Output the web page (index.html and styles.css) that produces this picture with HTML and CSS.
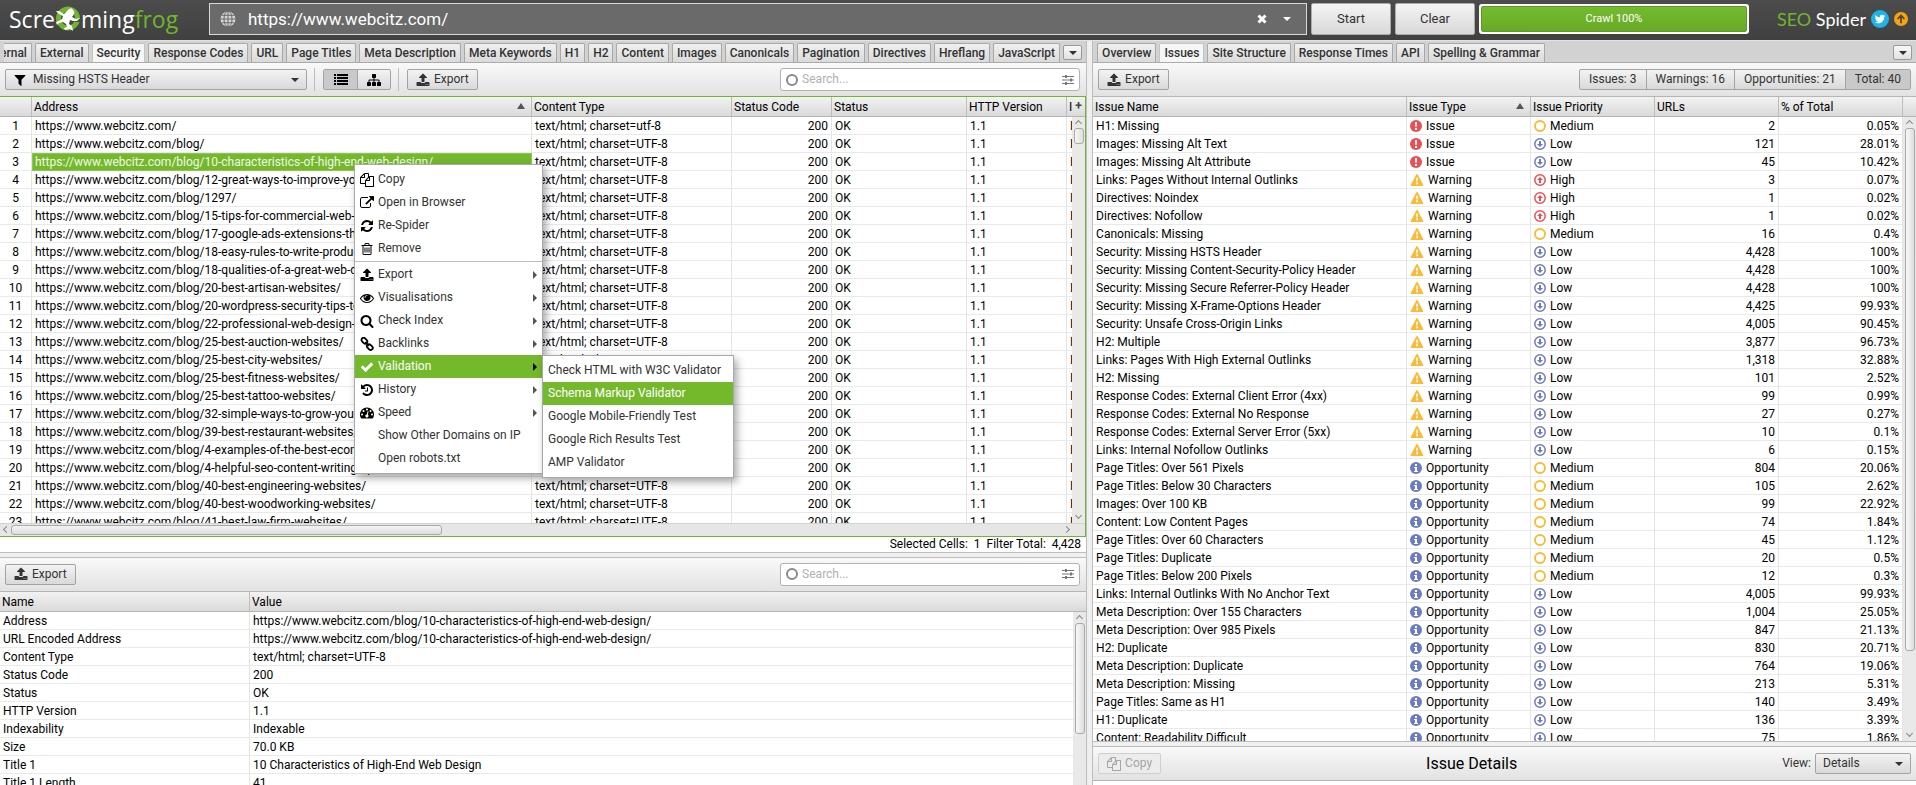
FILE: index.html
```html
<!DOCTYPE html>
<html lang="en">
<head>
    <meta charset="UTF-8">
    <meta name="viewport" content="width=device-width, initial-scale=1.0">
    <title>Screaming Frog SEO Spider</title>
    <link rel="stylesheet" href="styles.css">
</head>
<body>
    <!-- icon sprite -->
    <svg class="sprite" aria-hidden="true">
        <symbol id="i-filter" viewBox="0 0 1792 1792"><path d="M1595 295q17 41-14 70l-493 493v742q0 42-39 59-13 5-25 5-27 0-45-19l-256-256q-19-19-19-45v-486l-493-493q-31-29-14-70 17-39 59-39h1280q42 0 59 39z"/></symbol>
        <symbol id="i-list" viewBox="0 0 14 12"><path d="M0 0h2v2H0zM3 0h11v2H3zM0 3h2v2H0zM3 3h11v2H3zM0 6h2v2H0zM3 6h11v2H3zM0 9h2v2H0zM3 9h11v2H3z"/></symbol>
        <symbol id="i-sitemap" viewBox="0 0 1792 1792"><path d="M1792 1248v320q0 40-28 68t-68 28h-320q-40 0-68-28t-28-68v-320q0-40 28-68t68-28h96v-192h-512v192h96q40 0 68 28t28 68v320q0 40-28 68t-68 28h-320q-40 0-68-28t-28-68v-320q0-40 28-68t68-28h96v-192h-512v192h96q40 0 68 28t28 68v320q0 40-28 68t-68 28h-320q-40 0-68-28t-28-68v-320q0-40 28-68t68-28h96v-192q0-52 38-90t90-38h512v-192h-96q-40 0-68-28t-28-68v-320q0-40 28-68t68-28h320q40 0 68 28t28 68v320q0 40-28 68t-68 28h-96v192h512q52 0 90 38t38 90v192h96q40 0 68 28t28 68z"/></symbol>
        <symbol id="i-upload" viewBox="0 0 1792 1792"><path d="M1344 1472q0-26-19-45t-45-19-45 19-19 45 19 45 45 19 45-19 19-45zm256 0q0-26-19-45t-45-19-45 19-19 45 19 45 45 19 45-19 19-45zm128-224v320q0 40-28 68t-68 28h-1472q-40 0-68-28t-28-68v-320q0-40 28-68t68-28h427q21 56 70.5 92t110.5 36h256q61 0 110.5-36t70.5-92h427q40 0 68 28t28 68zm-325-648q-17 40-59 40h-256v448q0 26-19 45t-45 19h-256q-26 0-45-19t-19-45v-448h-256q-42 0-59-40-17-39 14-69l448-448q18-19 45-19t45 19l448 448q31 30 14 69z"/></symbol>
        <symbol id="i-copy" viewBox="0 0 1792 1792"><path d="M1696 384q40 0 68 28t28 68v1216q0 40-28 68t-68 28h-960q-40 0-68-28t-28-68v-288h-544q-40 0-68-28t-28-68v-672q0-40 20-88t48-76l408-408q28-28 76-48t88-20h416q40 0 68 28t28 68v328q68-40 128-40h416zm-544 213l-299 299h299v-299zm-640-384l-299 299h299v-299zm196 647l316-316v-416h-384v416q0 40-28 68t-68 28h-416v640h512v-256q0-40 20-88t48-76zm956 804v-1152h-384v416q0 40-28 68t-68 28h-416v640h896z"/></symbol>
        <symbol id="i-open" viewBox="0 0 1792 1792"><path d="M1408 928v320q0 119-84.5 203.5t-203.5 84.5h-832q-119 0-203.5-84.5t-84.5-203.5v-832q0-119 84.5-203.5t203.5-84.5h704q14 0 23 9t9 23v64q0 14-9 23t-23 9h-704q-66 0-113 47t-47 113v832q0 66 47 113t113 47h832q66 0 113-47t47-113v-320q0-14 9-23t23-9h64q14 0 23 9t9 23zm384-864v512q0 26-19 45t-45 19-45-19l-176-176-652 652q-10 10-23 10t-23-10l-114-114q-10-10-10-23t10-23l652-652-176-176q-19-19-19-45t19-45 45-19h512q26 0 45 19t19 45z"/></symbol>
        <symbol id="i-refresh" viewBox="0 0 1792 1792"><path d="M1639 1056q0 5-1 7-64 268-268 434.5t-478 166.5q-146 0-282.5-55t-243.5-157l-129 129q-19 19-45 19t-45-19-19-45v-448q0-26 19-45t45-19h448q26 0 45 19t19 45-19 45l-137 137q71 66 161 102t187 36q134 0 250-65t186-179q11-17 53-117 8-23 30-23h192q13 0 22.5 9.5t9.5 22.5zm25-800v448q0 26-19 45t-45 19h-448q-26 0-45-19t-19-45 19-45l138-138q-148-137-349-137-134 0-250 65t-186 179q-11 17-53 117-8 23-30 23h-199q-13 0-22.5-9.5t-9.5-22.5v-7q65-268 270-434.5t480-166.5q146 0 284 55.5t245 156.5l130-129q19-19 45-19t45 19 19 45z"/></symbol>
        <symbol id="i-trash" viewBox="0 0 1792 1792"><path d="M704 736v576q0 14-9 23t-23 9h-64q-14 0-23-9t-9-23v-576q0-14 9-23t23-9h64q14 0 23 9t9 23zm256 0v576q0 14-9 23t-23 9h-64q-14 0-23-9t-9-23v-576q0-14 9-23t23-9h64q14 0 23 9t9 23zm256 0v576q0 14-9 23t-23 9h-64q-14 0-23-9t-9-23v-576q0-14 9-23t23-9h64q14 0 23 9t9 23zm128 724v-948h-896v948q0 22 7 40.5t14.5 27 10.5 8.5h832q3 0 10.5-8.5t14.5-27 7-40.5zm-672-1076h448l-48-117q-7-9-17-11h-317q-10 2-17 11zm928 32v64q0 14-9 23t-23 9h-96v948q0 83-47 143.5t-113 60.5h-832q-66 0-113-58.5t-47-141.5v-952h-96q-14 0-23-9t-9-23v-64q0-14 9-23t23-9h309l70-167q15-37 54-63t79-26h320q40 0 79 26t54 63l70 167h309q14 0 23 9t9 23z"/></symbol>
        <symbol id="i-eye" viewBox="0 0 1792 1792"><path d="M1664 960q-152-236-381-353 61 104 61 225 0 185-131.5 316.5t-316.5 131.5-316.5-131.5-131.5-316.5q0-121 61-225-229 117-381 353 133 205 333.5 326.5t434.5 121.5 434.5-121.5 333.5-326.5zm-720-384q0-20-14-34t-34-14q-125 0-214.5 89.5t-89.5 214.5q0 20 14 34t34 14 34-14 14-34q0-86 61-147t147-61q20 0 34-14t14-34zm848 384q0 34-20 69-140 230-376.5 368.5t-499.5 138.5-499.5-139-376.5-368q-20-35-20-69t20-69q140-229 376.5-368t499.5-139 499.5 139 376.5 368q20 35 20 69z"/></symbol>
        <symbol id="i-search" viewBox="0 0 1792 1792"><path d="M1216 832q0-185-131.5-316.5t-316.5-131.5-316.5 131.5-131.5 316.5 131.5 316.5 316.5 131.5 316.5-131.5 131.5-316.5zm512 832q0 52-38 90t-90 38q-54 0-90-38l-343-342q-179 124-399 124-143 0-273.5-55.5t-225-150-150-225-55.5-273.5 55.5-273.5 150-225 225-150 273.5-55.5 273.5 55.5 225 150 150 225 55.5 273.5q0 220-124 399l343 343q37 37 37 90z"/></symbol>
        <symbol id="i-link" viewBox="0 0 14 14"><g fill="none" stroke="currentColor" stroke-width="1.8"><rect x="1.2" y="1.6" width="6.4" height="4.2" rx="2" transform="rotate(45 4.4 3.7)"/><rect x="6.6" y="8" width="6.4" height="4.2" rx="2" transform="rotate(45 9.8 10.1)"/><path d="M5.4 5l3.4 4"/></g></symbol>
        <symbol id="i-check" viewBox="0 0 1792 1792"><path d="M1671 566q0 40-28 68l-724 724-136 136q-28 28-68 28t-68-28l-136-136-362-362q-28-28-28-68t28-68l136-136q28-28 68-28t68 28l294 295 656-657q28-28 68-28t68 28l136 136q28 28 28 68z"/></symbol>
        <symbol id="i-history" viewBox="0 0 1792 1792"><path d="M1664 896q0 156-61 298t-164 245-245 164-298 61q-172 0-327-72.5t-264-204.5q-7-10-6.5-22.5t8.5-20.5l137-138q10-9 25-9 16 2 23 12 73 95 179 147t225 52q104 0 198.5-40.5t163.5-109.5 109.5-163.5 40.5-198.5-40.5-198.5-109.5-163.5-163.5-109.5-198.5-40.5q-98 0-188 35.5t-160 101.5l137 138q31 30 14 69-17 40-59 40h-448q-26 0-45-19t-19-45v-448q0-42 40-59 39-17 69 14l130 129q107-101 244.5-156.5t284.5-55.5q156 0 298 61t245 164 164 245 61 298zm-640-288v448q0 14-9 23t-23 9h-320q-14 0-23-9t-9-23v-64q0-14 9-23t23-9h224v-352q0-14 9-23t23-9h64q14 0 23 9t9 23z"/></symbol>
        <symbol id="i-speed" viewBox="0 0 14 14"><path fill-rule="evenodd" d="M7 1.500a7 7 0 0 1 7 7c0 1.400-.4 2.700-1.100 3.800a.6.6 0 0 1-.5.2H1.600a.6.6 0 0 1-.5-.2A7 7 0 0 1 7 1.500zM2 7.500a1 1 0 1 0 0 2 1 1 0 0 0 0-2zM3.500 4a1 1 0 1 0 0 2 1 1 0 0 0 0-2zM7 2.500a1 1 0 1 0 0 2 1 1 0 0 0 0-2zM10.500 4a1 1 0 1 0 0 2 1 1 0 0 0 0-2zM12 7.500a1 1 0 1 0 0 2 1 1 0 0 0 0-2zM7.600 5.200l-.8 3.300a1.500 1.500 0 1 0 1 .3l.8-3.300z"/></symbol>
        <symbol id="i-sliders" viewBox="0 0 12 12"><path d="M0 2h12v1H0zM0 5.500h12v1H0zM0 9h12v1H0zM3 1h2v3H3zM8 4.500h2v3H8zM3 8h2v3H3z"/></symbol>
        <symbol id="i-globe" viewBox="0 0 16 16"><circle cx="8" cy="8" r="7.500"/><path d="M8 0v16M0 8h16M1.500 4.300h13M1.500 11.700h13" stroke="#6a6a6a" fill="none"/><ellipse cx="8" cy="8" rx="4" ry="7.800" stroke="#6a6a6a" fill="none"/></symbol>
        <symbol id="i-close" viewBox="0 0 10 10"><path d="M1.500 1.500l7 7M8.500 1.500l-7 7" stroke="currentColor" stroke-width="3" fill="none"/></symbol>
        <symbol id="i-twitter" viewBox="0 0 1792 1792"><path d="M1684 408q-67 98-162 167 1 14 1 42 0 130-38 259.500t-115.500 248.500-184.500 210.500-258 146-323 54.500q-271 0-496-145 35 4 78 4 225 0 401-138-105-2-188-64.500t-114-159.500q33 5 61 5 43 0 85-11-112-23-185.500-111.500t-73.500-205.500v-4q68 38 146 41-66-44-105-115t-39-154q0-88 44-163 121 149 294.500 238.500t371.500 99.500q-8-38-8-74 0-134 94.500-228.500t228.500-94.500q140 0 236 102 109-21 205-78-37 115-142 178 93-10 186-50z"/></symbol>
        <symbol id="i-issue" viewBox="0 0 12 12"><circle cx="6" cy="6" r="6" fill="#e94f57"/><path d="M5 2h2l-.3 5H5.300zM5 8h2v2H5z" fill="#fff"/></symbol>
        <symbol id="i-warning" viewBox="0 0 14 13"><path d="M7 0q.5 0 .8.5l6 11.500q.3 1-.6 1H.8q-.9 0-.6-1l6-11.500Q6.500 0 7 0z" fill="#fdb933"/><path d="M6 4h2l-.3 4H6.300zM6 9h2v2H6z" fill="#fff"/></symbol>
        <symbol id="i-info" viewBox="0 0 12 12"><circle cx="6" cy="6" r="6" fill="#6b7cc0"/><path d="M5 2h2v2H5zM4 5h3v4h1v1H4V9h1V6H4z" fill="#fff"/></symbol>
        <symbol id="i-medium" viewBox="0 0 12 12"><circle cx="6" cy="6" r="5" fill="none" stroke="#fdb933" stroke-width="1.900"/></symbol>
        <symbol id="i-low" viewBox="0 0 12 12"><circle cx="6" cy="6" r="5.200" fill="none" stroke="#6b7cc0" stroke-width="1.500"/><path d="M5 3h2v3h2L6 9 3 6h2z" fill="#6b7cc0"/></symbol>
        <symbol id="i-high" viewBox="0 0 12 12"><circle cx="6" cy="6" r="5.200" fill="none" stroke="#e94f57" stroke-width="1.500"/><path d="M5 9h2V6h2L6 3 3 6h2z" fill="#e94f57"/></symbol>
    </svg>

    <header class="topbar">
        <div class="logo">
            <span>Scre</span>
            <svg class="frog" viewBox="0 0 26 28" aria-hidden="true">
                <circle cx="13" cy="13.500" r="9.500" fill="none" stroke="#6fb62c" stroke-width="5"/>
                <path d="M20 14h5v3h-5z" fill="#4a4a4a"/>
                <path d="M14 4q3-2 4 1 2 1 1 4-1 2-2 3l4 2 4-1-3 3-4 0-3-1-1 4 3 2 1 5-3-2-5 1-1-2 3-1-1-3-3-2-4 1-2 2-1-3 3-1 3-2 1-3-4-2-3-3 3 0 5 3z" fill="#fff"/>
            </svg>
            <span>ming</span><span class="green">frog</span>
        </div>
        <div class="url-box">
            <svg class="globe"><use href="#i-globe"/></svg>
            <input type="text" aria-label="URL" value="https://www.webcitz.com/">
            <button class="plain" aria-label="Clear URL"><svg class="close"><use href="#i-close"/></svg></button>
            <button class="plain" aria-label="Recent URLs"><i class="caret"></i></button>
        </div>
        <button class="big-btn">Start</button>
        <button class="big-btn">Clear</button>
        <div class="progress" role="progressbar" aria-valuenow="100"><div>Crawl 100%</div></div>
        <div class="brand"><span class="green">SEO</span> Spider</div>
        <a href="#" class="twitter" aria-label="Twitter"><svg><use href="#i-twitter"/></svg></a>
        <a href="#" class="update" aria-label="Update available"><svg viewBox="0 0 14 14"><path d="M7 12V3M3 7l4-4 4 4" fill="none" stroke="#444" stroke-width="2"/></svg></a>
    </header>

    <main class="panes">
        <div class="left">
            <section class="pane pane-main">
                <div class="tabs">
                    <div class="tab-list tab-list-end">
                        <button>Internal</button>
                        <button>External</button>
                        <button class="active">Security</button>
                        <button>Response Codes</button>
                        <button>URL</button>
                        <button>Page Titles</button>
                        <button>Meta Description</button>
                        <button>Meta Keywords</button>
                        <button>H1</button>
                        <button>H2</button>
                        <button>Content</button>
                        <button>Images</button>
                        <button>Canonicals</button>
                        <button>Pagination</button>
                        <button>Directives</button>
                        <button>Hreflang</button>
                        <button>JavaScript</button>
                    </div>
                    <button class="tab-more" aria-label="More tabs"><i class="caret"></i></button>
                </div>
                <div class="toolbar">
                    <div class="combo combo-filter">
                        <svg class="icon"><use href="#i-filter"/></svg>
                        <select aria-label="Filter"><option>Missing HSTS Header</option></select>
                        <i class="caret"></i>
                    </div>
                    <span class="sep"></span>
                    <div class="seg seg-icons">
                        <button class="on" aria-label="List view"><svg class="icon icon-list"><use href="#i-list"/></svg></button>
                        <button aria-label="Tree view"><svg class="icon"><use href="#i-sitemap"/></svg></button>
                    </div>
                    <span class="sep"></span>
                    <button class="btn"><svg class="icon"><use href="#i-upload"/></svg>Export</button>
                    <div class="search">
                        <i class="ring"></i>
                        <input type="text" aria-label="Search URLs" placeholder="Search...">
                        <svg class="sliders"><use href="#i-sliders"/></svg>
                    </div>
                </div>
                <div class="grid grid-focus">
                    <div class="grid-row">
                        <div class="viewport">
                            <table class="urls">
                                <colgroup><col class="c-num"><col class="c-addr"><col class="c-type"><col class="c-100"><col class="c-status"><col class="c-100"><col class="c-100"></colgroup>
                                <thead><tr><th></th><th class="sorted">Address</th><th>Content Type</th><th>Status Code</th><th>Status</th><th>HTTP Version</th><th>Indexability</th></tr></thead>
                                <tbody id="urlRows"></tbody>
                            </table>
                        </div>
                        <div class="scroll-col">
                            <button class="cap" aria-label="Add column">+</button>
                            <div class="vbar"><i class="arrow up"></i><i class="thumb thumb-small"></i><i class="arrow down"></i></div>
                        </div>
                    </div>
                    <div class="hbar"><i class="arrow back"></i><i class="thumb"></i><i class="arrow next"></i></div>
                </div>
                <div class="status-line"><span>Selected Cells:&nbsp; 1</span><span>Filter Total:&nbsp; 4,428</span></div>

                <div class="menu menu-context">
                    <button><svg class="icon"><use href="#i-copy"/></svg>Copy</button>
                    <button><svg class="icon"><use href="#i-open"/></svg>Open in Browser</button>
                    <button><svg class="icon"><use href="#i-refresh"/></svg>Re-Spider</button>
                    <button><svg class="icon"><use href="#i-trash"/></svg>Remove</button>
                    <hr>
                    <button class="more"><svg class="icon"><use href="#i-upload"/></svg>Export</button>
                    <button class="more"><svg class="icon"><use href="#i-eye"/></svg>Visualisations</button>
                    <button class="more"><svg class="icon"><use href="#i-search"/></svg>Check Index</button>
                    <button class="more"><svg class="icon"><use href="#i-link"/></svg>Backlinks</button>
                    <button class="more on"><svg class="icon"><use href="#i-check"/></svg>Validation</button>
                    <button class="more"><svg class="icon"><use href="#i-history"/></svg>History</button>
                    <button class="more"><svg class="icon"><use href="#i-speed"/></svg>Speed</button>
                    <button><span class="icon"></span>Show Other Domains on IP</button>
                    <button><span class="icon"></span>Open robots.txt</button>
                </div>
                <div class="menu menu-sub">
                    <button>Check HTML with W3C Validator</button>
                    <button class="on">Schema Markup Validator</button>
                    <button>Google Mobile-Friendly Test</button>
                    <button>Google Rich Results Test</button>
                    <button>AMP Validator</button>
                </div>
            </section>

            <div class="split-h"></div>

            <section class="pane pane-details">
                <div class="toolbar">
                    <button class="btn"><svg class="icon"><use href="#i-upload"/></svg>Export</button>
                    <div class="search">
                        <i class="ring"></i>
                        <input type="text" aria-label="Search details" placeholder="Search...">
                        <svg class="sliders"><use href="#i-sliders"/></svg>
                    </div>
                </div>
                <div class="grid">
                    <div class="grid-row">
                        <div class="viewport">
                            <table>
                                <colgroup><col class="c-name"><col></colgroup>
                                <thead><tr><th>Name</th><th class="last">Value</th></tr></thead>
                                <tbody id="detailRows"></tbody>
                            </table>
                        </div>
                        <div class="scroll-col">
                            <div class="cap"></div>
                            <div class="vbar"><i class="arrow up"></i><i class="thumb thumb-mid"></i></div>
                        </div>
                    </div>
                </div>
            </section>
        </div>

        <div class="split-v"></div>

        <section class="pane right">
            <div class="tabs">
                <div class="tab-list">
                    <button>Overview</button>
                    <button class="active">Issues</button>
                    <button>Site Structure</button>
                    <button>Response Times</button>
                    <button>API</button>
                    <button>Spelling &amp; Grammar</button>
                </div>
                <button class="tab-more" aria-label="More tabs"><i class="caret"></i></button>
            </div>
            <div class="toolbar">
                <button class="btn"><svg class="icon"><use href="#i-upload"/></svg>Export</button>
                <div class="seg seg-counts">
                    <button>Issues: 3</button>
                    <button>Warnings: 16</button>
                    <button>Opportunities: 21</button>
                    <button class="on">Total: 40</button>
                </div>
            </div>
            <div class="grid">
                <div class="grid-row">
                    <div class="viewport">
                        <table class="issues">
                            <colgroup><col><col class="c-issue"><col class="c-issue"><col class="c-issue"><col class="c-issue"></colgroup>
                            <thead><tr><th>Issue Name</th><th class="sorted">Issue Type</th><th>Issue Priority</th><th>URLs</th><th>% of Total</th></tr></thead>
                            <tbody id="issueRows"></tbody>
                        </table>
                    </div>
                    <div class="scroll-col">
                        <div class="cap"></div>
                        <div class="vbar"><i class="arrow up"></i><i class="thumb thumb-large"></i><i class="arrow down"></i></div>
                    </div>
                </div>
            </div>
            <div class="split-h"></div>
            <div class="toolbar toolbar-details">
                <button class="btn" disabled><svg class="icon"><use href="#i-copy"/></svg>Copy</button>
                <h2>Issue Details</h2>
                <div class="view">
                    <label for="view">View:</label>
                    <div class="combo combo-view">
                        <select id="view"><option>Details</option></select>
                        <i class="caret"></i>
                    </div>
                </div>
            </div>
            <div class="details-body"></div>
        </section>
    </main>

    <script src="app.js"></script>
</body>
</html>
```

FILE: styles.css
```css
* {
    box-sizing: border-box;
}
body {
    margin: 0;
    height: 100vh;
    display: flex;
    flex-direction: column;
    overflow: hidden;
    background: #fff;
    color: #000;
    font-family: Roboto, Arial, sans-serif;
    font-size: 12px;
    line-height: 17px;
}
button, input, select {
    font: inherit;
    color: inherit;
    margin: 0;
}
button {
    padding: 0;
    border: 0;
    background: none;
    white-space: nowrap;
}
svg {
    display: block;
    fill: currentColor;
    flex: none;
}
.sprite {
    position: absolute;
    width: 0;
    height: 0;
}
.icon {
    width: 14px;
    height: 14px;
    flex: none;
}
.green {
    color: #6fb62c;
}
.caret {
    flex: none;
    width: 0;
    height: 0;
    border: 4px solid transparent;
    border-top-color: currentColor;
    border-bottom: 0;
}

/* top bar */
.topbar {
    flex: none;
    display: flex;
    align-items: center;
    height: 41px;
    padding: 0 8px 3px 9px;
    background: linear-gradient(#4c4c4c, #404040);
    border-bottom: 1px solid #e4e4e4;
    color: #fff;
}
.logo {
    width: 200px;
    display: flex;
    align-items: center;
    font: 23px/32px "Open Sans", sans-serif;
}
.frog {
    width: 26px;
    height: 28px;
}
.url-box {
    flex: 1;
    display: flex;
    align-items: center;
    height: 32px;
    padding: 0 15px 0 10px;
    background: #6a6a6a;
    border: 1px solid #d8d8d8;
}
.globe {
    width: 16px;
    height: 16px;
    color: #d5d5d5;
}
.url-box input {
    flex: 1;
    min-width: 0;
    padding: 0 12px;
    border: 0;
    background: none;
    font-size: 17px;
    line-height: 24px;
}
.close {
    width: 10px;
    height: 10px;
}
.plain {
    display: flex;
}
.plain + .plain {
    margin-left: 16px;
}
.big-btn {
    width: 80px;
    height: 32px;
    margin-left: 4px;
    border: 1px solid #ababab;
    border-radius: 2px;
    background: linear-gradient(#f4f4f4, #d8d8d8);
    color: #333;
    font-size: 13px;
}
.progress {
    width: 270px;
    height: 30px;
    margin: 0 28px 0 4px;
    padding: 2px;
    background: #fff;
    border-radius: 3px;
}
.progress div {
    height: 26px;
    border: 1px solid #5c9a22;
    border-radius: 2px;
    background: linear-gradient(#74bb2e, #69a926);
    font-size: 11px;
    line-height: 24px;
    text-align: center;
}
.brand {
    font: 18px/24px Lato, sans-serif;
}
.twitter, .update {
    display: flex;
    align-items: center;
    justify-content: center;
    border-radius: 50%;
}
.twitter {
    width: 18px;
    height: 18px;
    margin: 0 5px;
    background: #1db4ec;
    color: #fff;
}
.twitter svg {
    width: 12px;
    height: 12px;
}
.update {
    width: 14px;
    height: 14px;
    background: #f9a20e;
}
.update svg {
    width: 12px;
    height: 12px;
}

/* panes */
.panes {
    flex: 1;
    min-height: 0;
    display: flex;
}
.left {
    width: 57%;
    flex: none;
    display: flex;
    flex-direction: column;
    margin-right: -6px;
    padding-right: 6px;
}
.pane {
    min-width: 0;
    min-height: 0;
    display: flex;
    flex-direction: column;
}
.pane-main {
    flex: 9;
    position: relative;
}
.pane-details {
    flex: 4;
}
.right {
    flex: 1;
}
.split-h {
    flex: none;
    height: 6px;
    border: solid #bdbdbd;
    border-width: 1px 0;
    background: #f0f0f0;
}
.split-v {
    flex: none;
    width: 7px;
    border: solid #bdbdbd;
    border-width: 0 1px;
    background: #efefef;
}

/* tabs */
.tabs {
    flex: none;
    display: flex;
    align-items: flex-end;
    height: 22px;
    padding: 0 4px;
    background: #d2d2d2;
    border-bottom: 1px solid #ababab;
}
.tab-list {
    flex: 1;
    min-width: 0;
    display: flex;
    gap: 3px;
    overflow: hidden;
}
.tab-list-end {
    justify-content: flex-end;
}
.tab-list button {
    flex: none;
    height: 19px;
    padding: 0 4px;
    border: 1px solid #a8a8a8;
    border-bottom: 0;
    border-radius: 2px 2px 0 0;
    background: linear-gradient(#f0f0f0, #dadada);
    color: #333;
    font-weight: 500;
}
.tab-list .active {
    background: #f6f6f6;
    border-color: #c4c4c4;
}
.tab-more {
    flex: none;
    display: flex;
    align-items: center;
    justify-content: center;
    width: 19px;
    height: 15px;
    margin: 0 0 2px 3px;
    border: 1px solid #999;
    border-radius: 2px;
    background: linear-gradient(#f8f8f8, #e2e2e2);
    color: #333;
}

/* toolbars */
.toolbar {
    flex: none;
    display: flex;
    align-items: center;
    height: 33px;
    padding: 0 5px;
    background: linear-gradient(#f9f9f9, #e2e2e2);
    color: #333;
}
.btn, .combo, .seg {
    height: 21px;
    border: 1px solid #a3a3a3;
    border-radius: 2px;
    background: linear-gradient(#f3f3f3, #d9d9d9);
}
.btn {
    display: flex;
    align-items: center;
    gap: 4px;
    padding: 0 8px;
}
.btn:disabled {
    color: #a5a5a5;
    border-color: #cfcfcf;
    background: #ececec;
}
.combo {
    display: flex;
    align-items: center;
    padding: 0 7px;
}
.combo select {
    flex: 1;
    min-width: 0;
    padding: 0;
    border: 0;
    background: none;
    appearance: none;
}
.combo-filter {
    width: 302px;
}
.combo-filter .icon {
    margin-right: 6px;
    color: #000;
}
.sep {
    width: 1px;
    height: 23px;
    margin: 0 8px 0 7px;
    background: #bdbdbd;
}
.seg {
    display: flex;
    overflow: hidden;
}
.seg button + button {
    border-left: 1px solid #a3a3a3;
}
.seg .on {
    background: #c9c9c9;
}
.seg-icons button {
    width: 33px;
    display: flex;
    align-items: center;
    justify-content: center;
    color: #000;
}
.icon-list {
    height: 12px;
}
.seg-counts {
    margin-left: auto;
}
.seg-counts button {
    padding: 0 9px;
}
.search {
    display: flex;
    align-items: center;
    width: 300px;
    height: 23px;
    margin: 0 1px 0 auto;
    padding: 0 5px;
    border: 1px solid #b2b2b2;
    border-radius: 3px;
    background: #fff;
}
.ring {
    width: 12px;
    height: 12px;
    border: 2px solid #8a8a8a;
    border-radius: 50%;
}
.search input {
    flex: 1;
    min-width: 0;
    padding: 0 4px;
    border: 0;
    background: none;
}
.search input::placeholder {
    color: #b0b0b0;
}
.sliders {
    width: 12px;
    height: 12px;
    color: #777;
}
.toolbar-details {
    justify-content: space-between;
    height: 34px;
    border-bottom: 1px solid #b5b5b5;
}
.toolbar-details h2 {
    margin: 0;
    color: #000;
    font-size: 16px;
    font-weight: 400;
}
.view {
    display: flex;
    align-items: center;
    gap: 4px;
}
.combo-view {
    width: 96px;
}
.details-body {
    flex: none;
    height: 4px;
}

/* tables */
.grid {
    flex: 1;
    min-height: 0;
    display: flex;
    flex-direction: column;
    overflow: hidden;
    border-top: 1px solid #b5b5b5;
}
.grid-focus {
    border: solid #6fb62c;
    border-width: 1px 1px 1px 0;
}
.grid-row {
    flex: 1;
    min-height: 0;
    display: flex;
}
.viewport {
    flex: 1;
    min-width: 0;
    overflow: hidden;
}
table {
    width: 100%;
    table-layout: fixed;
    border-spacing: 0;
}
.urls {
    width: 1167px;
}
.c-num {
    width: 32px;
}
.c-addr {
    width: 500px;
}
.c-type {
    width: 200px;
}
.c-100 {
    width: 100px;
}
.c-status {
    width: 135px;
}
.c-name {
    width: 250px;
}
.c-issue {
    width: 124px;
}
th, td {
    text-align: left;
    font-weight: 400;
    white-space: nowrap;
    overflow: hidden;
}
thead th, .cap {
    height: 20px;
    padding: 2px 2px 0;
    border-right: 1px solid #bdbdbd;
    border-bottom: 1px solid #b5b5b5;
    background: linear-gradient(#f2f2f2, #dadada);
}
td, tbody th {
    height: 18px;
    padding: 2px 3px 0;
    border-right: 1px solid #e4e4e4;
    border-bottom: 1px solid #e9e9e9;
    line-height: 15px;
}
tbody th {
    text-align: center;
}
.sorted::after {
    content: "";
    float: right;
    margin: 4px 4px 0 0;
    border: 4px solid transparent;
    border-top: 0;
    border-bottom: 6px solid #555;
}
th.last, td.last {
    border-right: 0;
}
.num {
    text-align: right;
}
td.selected {
    background: #74b82c;
    border: 1px solid #8cc84f;
    padding: 1px 2px 0;
    color: #f0f8e6;
}
.issues .icon {
    display: inline-block;
    width: 12px;
    height: 12px;
    margin-right: 4px;
    vertical-align: -2px;
}
.issues .icon-warning {
    width: 14px;
}

/* scrollbars */
.scroll-col {
    flex: none;
    width: 13px;
    display: flex;
    flex-direction: column;
}
.cap {
    flex: none;
    width: 13px;
    padding: 0;
    border-right: 0;
    color: #444;
    font-weight: 700;
}
.vbar {
    flex: 1;
    display: flex;
    flex-direction: column;
    align-items: center;
    padding: 4px 0 5px;
    background: #e9e9e9;
}
.hbar {
    flex: none;
    display: flex;
    align-items: center;
    height: 13px;
    padding: 0 16px 0 4px;
    background: #e6e6e6;
    border-top: 1px solid #d2d2d2;
}
.arrow {
    width: 5px;
    height: 5px;
    border: solid #888;
    border-width: 1px 0 0 1px;
}
.up {
    transform: rotate(45deg);
}
.down {
    margin-top: auto;
    transform: rotate(225deg);
}
.back {
    transform: rotate(-45deg);
}
.next {
    margin-left: auto;
    transform: rotate(135deg);
}
.thumb {
    border: 1px solid #a9a9a9;
    border-radius: 3px;
    background: linear-gradient(90deg, #f8f8f8, #dedede);
}
.vbar .thumb {
    width: 10px;
    margin-top: 2px;
}
.hbar .thumb {
    width: 431px;
    height: 10px;
    margin-left: 2px;
    background: linear-gradient(#f4f4f4, #dcdcdc);
}
.thumb-small {
    height: 16px;
}
.thumb-mid {
    height: 68%;
}
.thumb-large {
    height: 85%;
}
.status-line {
    flex: none;
    display: flex;
    justify-content: flex-end;
    gap: 6px;
    height: 15px;
    padding-right: 5px;
    line-height: 15px;
}

/* menus */
.menu {
    position: absolute;
    padding: 3px 0;
    border: 1px solid #a9a9a9;
    background: #fff;
    box-shadow: 3px 4px 8px rgba(0, 0, 0, 0.35);
}
.menu button {
    width: 100%;
    height: 23px;
    display: flex;
    align-items: center;
    gap: 4px;
    padding: 0 5px;
    color: #333;
}
.menu .icon {
    color: #000;
}
.menu .on, .menu .on .icon {
    background: #74b82c;
    color: #fff;
}
.menu hr {
    height: 1px;
    margin: 1px 0;
    border: 0;
    background: #bdbdbd;
}
.more::after {
    content: "";
    margin-left: auto;
    border: 4px solid transparent;
    border-left: 4px solid #555;
    border-right: 0;
}
.more.on::after {
    border-left-color: #000;
}
.menu-context {
    left: 354px;
    top: 123px;
    width: 189px;
}
.menu-sub {
    left: 542px;
    top: 314px;
    width: 192px;
}
```

FILE: app.js
```js
(function() {
    const base = 'https://www.webcitz.com/';
    const pages = [
        '', 'blog/', 'blog/10-characteristics-of-high-end-web-design/',
        'blog/12-great-ways-to-improve-your-website/', 'blog/1297/',
        'blog/15-tips-for-commercial-web-design/', 'blog/17-google-ads-extensions-that-work/',
        'blog/18-easy-rules-to-write-product-pages/', 'blog/18-qualities-of-a-great-web-design/',
        'blog/20-best-artisan-websites/', 'blog/20-wordpress-security-tips-to-use/',
        'blog/22-professional-web-design-tips/', 'blog/25-best-auction-websites/',
        'blog/25-best-city-websites/', 'blog/25-best-fitness-websites/',
        'blog/25-best-tattoo-websites/', 'blog/32-simple-ways-to-grow-your-list/',
        'blog/39-best-restaurant-websites/', 'blog/4-examples-of-the-best-ecommerce/',
        'blog/4-helpful-seo-content-writing-tips/', 'blog/40-best-engineering-websites/',
        'blog/40-best-woodworking-websites/', 'blog/41-best-law-firm-websites/'
    ];

    const details = [
        ['Address', base + pages[2]],
        ['URL Encoded Address', base + pages[2]],
        ['Content Type', 'text/html; charset=UTF-8'],
        ['Status Code', '200'],
        ['Status', 'OK'],
        ['HTTP Version', '1.1'],
        ['Indexability', 'Indexable'],
        ['Size', '70.0 KB'],
        ['Title 1', '10 Characteristics of High-End Web Design'],
        ['Title 1 Length', '41']
    ];

    // name, type, priority, urls, % of total
    const issues = [
        ['H1: Missing', 'Issue', 'Medium', '2', '0.05%'],
        ['Images: Missing Alt Text', 'Issue', 'Low', '121', '28.01%'],
        ['Images: Missing Alt Attribute', 'Issue', 'Low', '45', '10.42%'],
        ['Links: Pages Without Internal Outlinks', 'Warning', 'High', '3', '0.07%'],
        ['Directives: Noindex', 'Warning', 'High', '1', '0.02%'],
        ['Directives: Nofollow', 'Warning', 'High', '1', '0.02%'],
        ['Canonicals: Missing', 'Warning', 'Medium', '16', '0.4%'],
        ['Security: Missing HSTS Header', 'Warning', 'Low', '4,428', '100%'],
        ['Security: Missing Content-Security-Policy Header', 'Warning', 'Low', '4,428', '100%'],
        ['Security: Missing Secure Referrer-Policy Header', 'Warning', 'Low', '4,428', '100%'],
        ['Security: Missing X-Frame-Options Header', 'Warning', 'Low', '4,425', '99.93%'],
        ['Security: Unsafe Cross-Origin Links', 'Warning', 'Low', '4,005', '90.45%'],
        ['H2: Multiple', 'Warning', 'Low', '3,877', '96.73%'],
        ['Links: Pages With High External Outlinks', 'Warning', 'Low', '1,318', '32.88%'],
        ['H2: Missing', 'Warning', 'Low', '101', '2.52%'],
        ['Response Codes: External Client Error (4xx)', 'Warning', 'Low', '99', '0.99%'],
        ['Response Codes: External No Response', 'Warning', 'Low', '27', '0.27%'],
        ['Response Codes: External Server Error (5xx)', 'Warning', 'Low', '10', '0.1%'],
        ['Links: Internal Nofollow Outlinks', 'Warning', 'Low', '6', '0.15%'],
        ['Page Titles: Over 561 Pixels', 'Opportunity', 'Medium', '804', '20.06%'],
        ['Page Titles: Below 30 Characters', 'Opportunity', 'Medium', '105', '2.62%'],
        ['Images: Over 100 KB', 'Opportunity', 'Medium', '99', '22.92%'],
        ['Content: Low Content Pages', 'Opportunity', 'Medium', '74', '1.84%'],
        ['Page Titles: Over 60 Characters', 'Opportunity', 'Medium', '45', '1.12%'],
        ['Page Titles: Duplicate', 'Opportunity', 'Medium', '20', '0.5%'],
        ['Page Titles: Below 200 Pixels', 'Opportunity', 'Medium', '12', '0.3%'],
        ['Links: Internal Outlinks With No Anchor Text', 'Opportunity', 'Low', '4,005', '99.93%'],
        ['Meta Description: Over 155 Characters', 'Opportunity', 'Low', '1,004', '25.05%'],
        ['Meta Description: Over 985 Pixels', 'Opportunity', 'Low', '847', '21.13%'],
        ['H2: Duplicate', 'Opportunity', 'Low', '830', '20.71%'],
        ['Meta Description: Duplicate', 'Opportunity', 'Low', '764', '19.06%'],
        ['Meta Description: Missing', 'Opportunity', 'Low', '213', '5.31%'],
        ['Page Titles: Same as H1', 'Opportunity', 'Low', '140', '3.49%'],
        ['H1: Duplicate', 'Opportunity', 'Low', '136', '3.39%'],
        ['Content: Readability Difficult', 'Opportunity', 'Low', '75', '1.86%']
    ];

    const typeIcons = { Issue: 'issue', Warning: 'warning', Opportunity: 'info' };

    function icon(name) {
        return `<svg class="icon icon-${name}"><use href="#i-${name}"/></svg>`;
    }

    document.getElementById('urlRows').innerHTML = pages.map((page, i) => `<tr>
        <th scope="row">${i + 1}</th>
        <td class="${i === 2 ? 'selected' : ''}">${base + page}</td>
        <td>text/html; charset=${i === 0 ? 'utf-8' : 'UTF-8'}</td>
        <td class="num">200</td><td>OK</td><td>1.1</td><td>Indexable</td>
    </tr>`).join('');

    document.getElementById('detailRows').innerHTML = details.map(([name, value]) =>
        `<tr><td>${name}</td><td class="last">${value}</td></tr>`).join('');

    document.getElementById('issueRows').innerHTML = issues.map(([name, type, priority, urls, total]) => `<tr>
        <td>${name}</td>
        <td>${icon(typeIcons[type])}${type}</td>
        <td>${icon(priority.toLowerCase())}${priority}</td>
        <td class="num">${urls}</td><td class="num">${total}</td>
    </tr>`).join('');
})();
```
